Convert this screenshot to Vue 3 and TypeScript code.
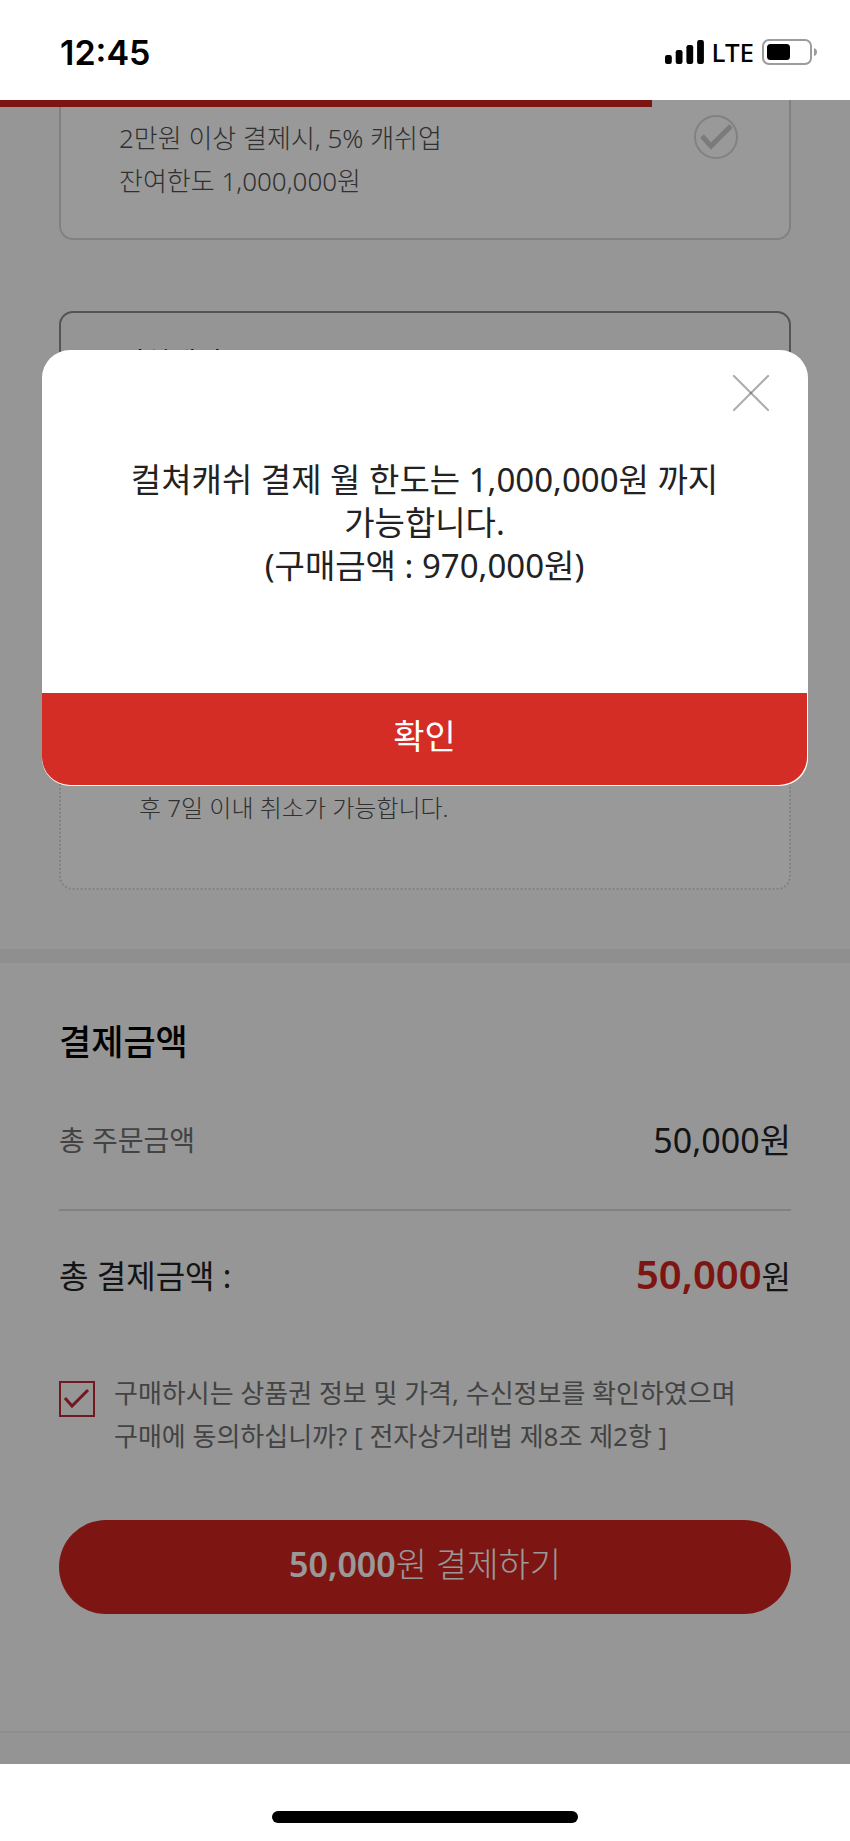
<script setup lang="ts">
import { ref } from 'vue'

const agreed = ref<boolean>(true)
const payMethod = ref<string>('')
const modalOpen = ref<boolean>(true)
const progress = 76.7
const amount = (50000).toLocaleString('en-US')
const limit = (1000000).toLocaleString('en-US')
const purchase = (970000).toLocaleString('en-US')
const signalBars = [9, 14, 19, 24]

function closeModal(): void {
  modalOpen.value = false
}
</script>

<template>
  <div class="screen">
    <header class="status">
      <time class="clock">12:45</time>
      <div class="indicators">
        <svg class="signal" viewBox="0 0 39 24" aria-hidden="true">
          <rect
            v-for="(h, i) in signalBars"
            :key="h"
            :x="i * 10.7"
            :y="24 - h"
            width="6.8"
            :height="h"
            rx="2.2"
          />
        </svg>
        <span class="network">LTE</span>
        <svg class="battery" viewBox="0 0 56 26" aria-hidden="true">
          <rect x="1" y="1" width="48" height="24" rx="6" fill="none" stroke="#9c9c9c" stroke-width="2" />
          <rect x="5" y="5" width="23" height="16" rx="3.5" />
          <path d="M52 9 Q55 10 55 13 Q55 16 52 17 Z" fill="#9c9c9c" />
        </svg>
      </div>
    </header>

    <main class="view">
      <div class="progress" :style="{ width: progress + '%' }"></div>

      <section class="methods">
        <label class="card first">
          <span class="desc">2만원 이상 결제시, 5% 캐쉬업<br />잔여한도 {{ limit }}원</span>
          <span class="tick round">
            <input v-model="payMethod" type="radio" name="method" value="cashup" />
            <svg viewBox="0 0 44 44" aria-hidden="true">
              <path d="M8 21 L17 31 L37 11" fill="none" stroke="#cdcdcd" stroke-width="5" />
            </svg>
          </span>
        </label>

        <div class="card selected">
          <h2 class="name">컬쳐캐쉬</h2>
        </div>

        <div class="card notice">
          <p>후 7일 이내 취소가 가능합니다.</p>
        </div>
      </section>

      <section class="payment">
        <h2 class="title">결제금액</h2>
        <div class="row order">
          <span class="label">총 주문금액</span>
          <span class="sum">{{ amount }}원</span>
        </div>
        <div class="row total">
          <span>총 결제금액 :</span>
          <span><strong>{{ amount }}</strong>원</span>
        </div>

        <label class="consent">
          <span class="tick square">
            <input v-model="agreed" type="checkbox" />
            <svg v-if="agreed" viewBox="0 0 36 36" aria-hidden="true">
              <path d="M6 17 L13 25 L29 9" fill="none" stroke="#be2a36" stroke-width="3" />
            </svg>
          </span>
          <span>구매하시는 상품권 정보 및 가격, 수신정보를 확인하였으며<br />구매에 동의하십니까? [ 전자상거래법 제8조 제2항 ]</span>
        </label>

        <button class="pay" type="button"><strong>{{ amount }}</strong>원 결제하기</button>
      </section>

      <footer class="foot"></footer>

      <div v-if="modalOpen" class="overlay">
        <div class="modal" role="dialog" aria-modal="true">
          <button class="close" type="button" aria-label="닫기" @click="closeModal">
            <svg viewBox="0 0 36 36" aria-hidden="true">
              <path d="M0 0 L36 36" />
              <path d="M36 0 L0 36" />
            </svg>
          </button>
          <p class="message">
            컬쳐캐쉬 결제 월 한도는 {{ limit }}원 까지<br />가능합니다.<br />(구매금액 : {{ purchase }}원)
          </p>
          <button class="confirm" type="button" @click="closeModal">확인</button>
        </div>
      </div>
    </main>

    <div class="home"><span class="bar"></span></div>
  </div>
</template>

<style>
body {
  margin: 0;
  background: #fff;
}
</style>

<style scoped>
.screen {
  display: flex;
  flex-direction: column;
  min-height: 100vh;
  font-family: 'Noto Sans', 'Noto Sans CJK KR', sans-serif;
  font-size: 26px;
  line-height: 43px;
  color: #222;
}
.screen * {
  box-sizing: border-box;
}
h2,
p {
  margin: 0;
}
button {
  border: 0;
  padding: 0;
  font-family: inherit;
  cursor: pointer;
}
.status {
  display: flex;
  justify-content: space-between;
  align-items: center;
  height: 100px;
  padding: 4px 32px 0 60px;
  color: #000;
}
.clock {
  font-family: Inter, sans-serif;
  font-size: 34px;
  font-weight: 600;
}
.indicators {
  display: flex;
  align-items: center;
  gap: 8px;
}
.signal {
  width: 39px;
  height: 24px;
}
.network {
  font-size: 26px;
  font-weight: 500;
}
.battery {
  width: 56px;
  height: 26px;
}
.view {
  position: relative;
  flex: 1;
  display: flex;
  flex-direction: column;
  overflow: hidden;
  background: #fafafa;
}
.progress {
  position: absolute;
  top: 0;
  left: 0;
  height: 7px;
  background: #d12320;
}
.methods {
  padding: 0 59px 59px;
  border-bottom: 14px solid #efefef;
}
.card {
  border: 2px solid #d8d8d8;
  border-radius: 14px;
  background: #fff;
}
.first {
  display: flex;
  justify-content: space-between;
  align-items: flex-start;
  padding: 15px 51px 35px 58px;
  border-top: 0;
  border-top-left-radius: 0;
  border-top-right-radius: 0;
}
.consent {
  color: #707070;
}
.desc,
.notice {
  color: #505050;
  font-weight: 300;
}
.desc {
  padding-top: 2px;
}
.tick {
  display: grid;
  flex: none;
}
.tick input,
.tick svg {
  grid-area: 1 / 1;
  width: 100%;
  height: 100%;
  margin: 0;
}
.tick input {
  appearance: none;
}
.tick svg {
  pointer-events: none;
}
.round {
  width: 44px;
  height: 44px;
}
.round input {
  border: 2px solid #d8d8d8;
  border-radius: 50%;
}
.selected {
  margin-top: 71px;
  padding: 28px 58px 151px;
  border-color: #8c8c8c;
  background: #f8f9fb;
}
.name {
  font-size: 28px;
  font-weight: 400;
}
.notice {
  margin-top: 28px;
  padding: 219px 78px 59px;
  border-style: dotted;
  font-size: 24px;
}
.payment {
  padding: 57px 59px 117px;
}
.title {
  color: #000;
  font-size: 35px;
  font-weight: 500;
}
.row {
  display: flex;
  justify-content: space-between;
  align-items: center;
  font-size: 32px;
}
.order {
  margin-top: 56px;
  padding-bottom: 47px;
  border-bottom: 2px solid #d8d8d8;
}
.label {
  color: #707070;
  font-size: 28px;
}
.sum {
  font-size: 34px;
}
.total {
  margin-top: 41px;
}
.total strong {
  color: #d12320;
  font-size: 40px;
  font-weight: 600;
}
.consent {
  display: flex;
  gap: 19px;
  margin-top: 74px;
}
.square {
  width: 36px;
  height: 36px;
  margin-top: 9px;
}
.square input {
  border: 2px solid #be2a36;
}
.pay {
  display: block;
  width: 100%;
  height: 94px;
  margin-top: 62px;
  padding-bottom: 10px;
  border-radius: 47px;
  background: #d12320;
  color: #fff;
  font-size: 34px;
  font-weight: 300;
}
.pay strong {
  font-weight: 600;
}
.foot {
  flex: 1;
  min-height: 32px;
  border-top: 2px solid #efefef;
  background: #f7f7f7;
}
.overlay {
  position: absolute;
  inset: 0;
  padding: 250px 42px 0;
  background: rgba(0, 0, 0, 0.4);
}
.modal {
  display: flex;
  flex-direction: column;
  padding: 0 1px 1px 0;
  border-radius: 28px;
  background: #fff;
  overflow: hidden;
}
.close {
  align-self: flex-end;
  width: 36px;
  height: 36px;
  margin: 25px 38px 0 0;
  background: none;
}
.close svg {
  display: block;
  stroke: rgba(70, 70, 75, 0.45);
  stroke-width: 2;
}
.message {
  padding: 47px 20px 106px;
  font-size: 33px;
  text-align: center;
}
.confirm {
  height: 92px;
  padding-bottom: 10px;
  border-radius: 0 0 28px 28px;
  background: #d42d25;
  color: #fff;
  font-size: 34px;
}
.home {
  display: flex;
  justify-content: center;
  align-items: flex-start;
  height: 77px;
  padding-top: 47px;
}
.bar {
  width: 36%;
  height: 12px;
  border-radius: 6px;
  background: #000;
}
</style>
